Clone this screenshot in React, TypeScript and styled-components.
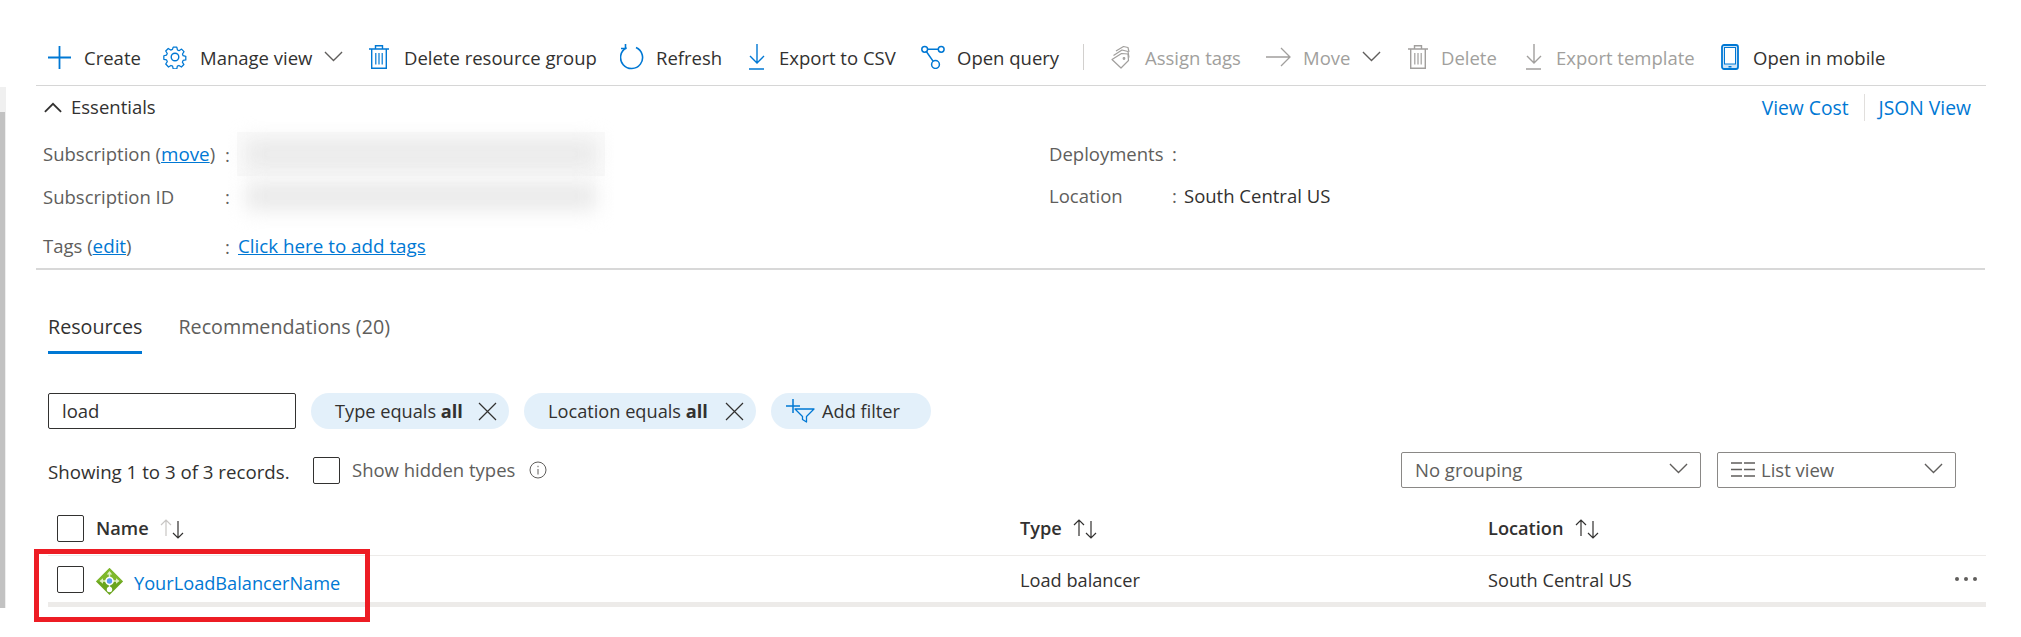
import React from 'react';
import styled, { createGlobalStyle } from 'styled-components';

const BLUE = '#0078d4';
const MUTED = '#a19f9d';

const GlobalStyle = createGlobalStyle`
  html, body {
    margin: 0;
    padding: 0;
    background: #fff;
  }
  body {
    font-family: 'Open Sans', 'Noto Sans', sans-serif;
    font-size: 18.5px;
    color: #323130;
  }
  * {
    box-sizing: border-box;
  }
`;

const Page = styled.div`
  display: flex;
  width: 2021px;
  height: 637px;
  overflow: hidden;
`;

const Rail = styled.div`
  flex: none;
  width: 36px;
  padding-top: 87px;
`;

const RailTop = styled.div`
  width: 6px;
  height: 25px;
  background: #f0f0f0;
`;

const RailThumb = styled.div`
  width: 6px;
  height: 496px;
  background: #c2c2c2;
  border-right: 1px solid #eee;
`;

const Content = styled.div`
  position: relative;
  flex: none;
  width: 1950px;
  padding-top: 29px;
`;

const Toolbar = styled.div`
  display: flex;
  align-items: center;
  height: 57px;
  padding-left: 12px;
  border-bottom: 1px solid #d6d6d6;
`;

const ToolItem = styled.div<{ $width: number; $disabled?: boolean }>`
  display: flex;
  flex: none;
  align-items: center;
  width: ${(p) => p.$width}px;
  white-space: nowrap;
  color: ${(p) => (p.$disabled ? MUTED : '#323130')};
`;

const ToolIcon = styled.span<{ $width: number; $disabled?: boolean }>`
  display: flex;
  flex: none;
  align-items: center;
  width: ${(p) => p.$width}px;
  height: 28px;
  color: ${(p) => (p.$disabled ? MUTED : BLUE)};
`;

const ToolChevron = styled.span`
  display: flex;
  margin-left: 12px;
  color: #605e5c;
`;

const ToolDivider = styled.div`
  flex: none;
  width: 28px;
  height: 26px;
  border-left: 1px solid #d2d0ce;
`;

const EssentialsHead = styled.div`
  display: flex;
  align-items: center;
  height: 43px;
  padding: 0 15px 0 8px;
`;

const EssentialsTitle = styled.span`
  margin-left: 9px;
  margin-top: -2px;
  font-weight: 500;
  color: #323130;
`;

const HeadLinks = styled.div`
  display: flex;
  align-items: center;
  margin-left: auto;
`;

const PlainLink = styled.a<{ $divided?: boolean }>`
  font-size: 19.3px;
  color: ${BLUE};
  ${(p) =>
    p.$divided &&
    `
    padding-left: 14px;
    margin-left: 15px;
    border-left: 1px solid #e1dfdd;
  `}
`;

const EssentialsGrid = styled.div`
  display: grid;
  grid-template-columns: 1006px 1fr;
  grid-template-rows: 42px 42px 54px;
  margin-top: 3px;
  margin-right: 1px;
  padding-left: 7px;
  height: 138px;
  border-bottom: 2px solid #d8d8d8;
`;

const Prop = styled.div<{ $labelWidth: number; $low?: boolean }>`
  display: grid;
  grid-template-columns: ${(p) => p.$labelWidth}px 13px 1fr;
  align-items: center;
  height: 42px;
  margin-top: ${(p) => (p.$low ? 9 : 0)}px;
  color: #605e5c;
  white-space: nowrap;
`;

const Underlined = styled.a`
  font-size: 18.8px;
  color: ${BLUE};
  text-decoration: underline;
`;

const Value = styled.span`
  margin-left: -1px;
  color: #323130;
`;

const BlurPatch = styled.div<{ $soft?: boolean }>`
  display: flex;
  align-items: center;
  justify-content: center;
  width: 368px;
  height: 44px;
  margin-left: -1px;
  background: ${(p) => (p.$soft ? 'transparent' : '#fafafa')};
`;

const BlurBar = styled.div`
  width: 350px;
  height: 28px;
  background: #e9e9e9;
  filter: blur(10px);
`;

const Tabs = styled.div`
  display: flex;
  gap: 36px;
  padding: 40px 0 0 12px;
`;

const Tab = styled.div<{ $active?: boolean }>`
  height: 44px;
  line-height: 34px;
  font-size: 19.7px;
  color: ${(p) => (p.$active ? '#323130' : '#605e5c')};
  border-bottom: 3px solid ${(p) => (p.$active ? BLUE : 'transparent')};
`;

const FilterRow = styled.div`
  display: flex;
  align-items: center;
  gap: 15px;
  margin-top: 39px;
  padding-left: 12px;
`;

const SearchBox = styled.div`
  flex: none;
  width: 248px;
  height: 36px;
  padding-left: 13px;
  line-height: 34px;
  border: 1px solid #323130;
  border-radius: 2px;
`;

const Pill = styled.div<{ $width: number }>`
  display: flex;
  flex: none;
  align-items: center;
  width: ${(p) => p.$width}px;
  height: 36px;
  padding-left: 24px;
  background: #e3f0fa;
  border-radius: 18px;
  font-size: 18.2px;
  white-space: nowrap;
`;

const PillClose = styled.span`
  display: flex;
  margin-left: auto;
  margin-right: 12px;
  color: #323130;
`;

const AddFilterPill = styled(Pill)`
  padding-left: 15px;
  gap: 7px;
`;

const ListRow = styled.div`
  display: flex;
  align-items: center;
  height: 36px;
  margin-top: 23px;
  padding: 0 30px 0 12px;
`;

const Records = styled.span`
  width: 265px;
  padding-top: 2px;
  font-size: 18.7px;
  white-space: nowrap;
`;

const Check = styled.span`
  display: block;
  flex: none;
  width: 27px;
  height: 27px;
  border: 1px solid #323130;
  border-radius: 2px;
  background: #fff;
`;

const HiddenLabel = styled.span`
  margin: -2px 14px 0 12px;
  color: #605e5c;
  white-space: nowrap;
`;

const InfoIcon = styled.span`
  display: flex;
  color: #605e5c;
`;

const SelectGroup = styled.div`
  display: flex;
  gap: 16px;
  margin-left: auto;
`;

const Select = styled.div<{ $width: number }>`
  display: flex;
  flex: none;
  align-items: center;
  width: ${(p) => p.$width}px;
  height: 36px;
  padding: 0 12px 2px 13px;
  border: 1px solid #8a8886;
  border-radius: 2px;
  color: #605e5c;
`;

const SelectIcon = styled.span`
  display: flex;
  margin-right: 6px;
`;

const SelectChevron = styled.span`
  display: flex;
  margin-left: auto;
`;

const TableRow = styled.div<{ $head?: boolean }>`
  display: grid;
  grid-template-columns: 972px 468px 1fr;
  align-items: center;
  height: ${(p) => (p.$head ? 55 : 46)}px;
  margin-top: ${(p) => (p.$head ? 13 : 0)}px;
  margin-left: 12px;
  font-size: 18.2px;
  border-bottom: ${(p) => (p.$head ? '1px solid #edebe9' : 'none')};
`;

const NameCell = styled.div`
  display: flex;
  align-items: center;
  padding-left: 9px;
`;

const HeadLabel = styled.span`
  display: flex;
  align-items: center;
  font-weight: 600;
  color: #323130;
`;

const NameLabel = styled(HeadLabel)`
  margin-left: 12px;
`;

const SortIcon = styled.span`
  display: flex;
  margin-left: 11px;
`;

const ResourceIcon = styled.span`
  display: flex;
  margin: 5px 11px 0 12px;
`;

const ResourceLink = styled.a`
  margin-top: 7px;
  color: ${BLUE};
`;

const CellText = styled.span`
  padding-top: 2px;
  color: #323130;
`;

const LocationCell = styled.div`
  display: flex;
  align-items: center;
  justify-content: space-between;
  padding-right: 9px;
`;

const Dots = styled.span`
  display: flex;
  gap: 5px;
`;

const Dot = styled.i`
  display: block;
  width: 4px;
  height: 4px;
  border-radius: 50%;
  background: #605e5c;
`;

const TableFoot = styled.div`
  height: 5px;
  margin-left: 12px;
  background: #edebe9;
`;

const Highlight = styled.div`
  position: absolute;
  left: -2px;
  top: 549px;
  width: 336px;
  height: 73px;
  border: 5px solid #ed1c24;
  pointer-events: none;
`;

const Chevron = ({ up, size = 19 }: { up?: boolean; size?: number }) => (
  <svg width={size} height={size * 0.6} viewBox="0 0 20 12" fill="none" stroke="currentColor" strokeWidth={up ? 2 : 1.4}>
    <path d={up ? 'M1 11 10 2l9 9' : 'M1 1l9 9 9-9'} />
  </svg>
);

const Close = () => (
  <svg width="19" height="19" viewBox="0 0 19 19" stroke="currentColor" strokeWidth="1.2">
    <path d="M1 1l17 17M18 1 1 18" />
  </svg>
);

const PlusIcon = () => (
  <svg width="23" height="23" viewBox="0 0 23 23" stroke="currentColor" strokeWidth="1.8">
    <path d="M11.5 0v23M0 11.5h23" />
  </svg>
);

const GearIcon = () => (
  <svg width="24" height="24" viewBox="0 0 24 24" fill="none" stroke="currentColor" strokeWidth="1.4" strokeLinejoin="round">
    <path d="M10 1h4l.7 3.2 1.8.8 2.8-1.8 2.7 2.8-1.7 2.7.7 1.8 3 .7v4l-3 .6-.8 1.9 1.7 2.7-2.8 2.7-2.7-1.7-1.8.8-.6 3h-4l-.7-3-1.8-.8-2.7 1.7L1.700 19.800l1.700-2.700-.8-1.900-3-.6v-4l3-.7.8-1.800L1.700 5.300l2.800-2.800 2.700 1.800 2-.8z" transform="translate(1.200 1.200) scale(.9)" />
    <circle cx="12" cy="12" r="3.800" />
  </svg>
);

const TrashIcon = () => (
  <svg width="20" height="26" viewBox="0 0 20 26" fill="none" stroke="currentColor" strokeWidth="1.4">
    <path d="M0 5h20M6.500 5V1.700h7V5M2.700 5v19.300h14.600V5" />
    <path d="M6.800 9v11.500M10 9v11.500M13.200 9v11.500" strokeWidth="1.200" />
  </svg>
);

const RefreshIcon = () => (
  <svg width="24" height="26" viewBox="0 0 24 26" fill="none" stroke="currentColor" strokeWidth="1.600">
    <path d="M6.500 3.800A11 11 0 1 0 16 3.500" />
    <path d="M5.500 0v4.500H1" />
  </svg>
);

const DownloadIcon = () => (
  <svg width="18" height="26" viewBox="0 0 18 26" fill="none" stroke="currentColor" strokeWidth="1.400">
    <path d="M9 0v18.500M2 12l7 7 7-7M1 25h15" />
  </svg>
);

const QueryIcon = () => (
  <svg width="24" height="24" viewBox="0 0 24 24" fill="none" stroke="currentColor" strokeWidth="1.500">
    <circle cx="3.700" cy="4.300" r="2.900" />
    <circle cx="20.200" cy="4.300" r="2.900" />
    <circle cx="14.500" cy="19.500" r="3.900" />
    <path d="M6.600 4.300h10.700M5.500 6.700l6.700 9.700" />
  </svg>
);

const TagsIcon = () => (
  <svg width="20" height="24" viewBox="0 0 20 24" fill="none" stroke="currentColor" strokeWidth="1.200" strokeLinejoin="round">
    <path d="M1 14.500 10 23l7.500-7.500-.5-6.500-6.500-.5z" />
    <path d="M2.500 10.500 11 5l6 1.500 1 6" />
    <path d="M5 6 12.500 1.500 17 2.500l1 4.500" />
    <circle cx="13" cy="13.500" r=".8" />
  </svg>
);

const ArrowIcon = () => (
  <svg width="25" height="20" viewBox="0 0 25 20" fill="none" stroke="currentColor" strokeWidth="1.300">
    <path d="M0 10h24M15 1l9 9-9 9" />
  </svg>
);

const MobileIcon = () => (
  <svg width="18" height="26" viewBox="0 0 18 26" fill="none">
    <rect x="1" y="1" width="16" height="24" rx="2" fill="#cfe4f7" stroke="currentColor" strokeWidth="1.800" />
    <rect x="3.500" y="3.500" width="11" height="16.500" fill="#fff" stroke="currentColor" strokeWidth="1" />
    <rect x="7.500" y="22" width="3" height="1.500" fill="currentColor" />
  </svg>
);

const FilterPlusIcon = () => (
  <svg width="29" height="24" viewBox="0 0 29 24" fill="none" stroke={BLUE} strokeWidth="1.300">
    <path d="M0 7h14M7 0v14" strokeWidth="1.500" />
    <path d="M9 10h19l-7.500 7.500V23l-4-2.500v-3z" strokeLinejoin="round" />
  </svg>
);

const Info = () => (
  <svg width="18" height="18" viewBox="0 0 18 18" fill="none" stroke="currentColor" strokeWidth="1">
    <circle cx="9" cy="9" r="8" />
    <path d="M9 8v5.500M9 4.800v1.400" />
  </svg>
);

const ListIcon = () => (
  <svg width="24" height="15" viewBox="0 0 24 15" stroke="currentColor" strokeWidth="1.300">
    <path d="M0 1h11M13 1h11M0 7.500h11M13 7.500h11M0 14h11M13 14h11" />
  </svg>
);

const SortArrows = ({ faded }: { faded?: boolean }) => (
  <svg width="24" height="21" viewBox="0 0 24 21" fill="none" strokeWidth="1.200">
    <path d="M6 18V2M1 7l5-5 5 5" stroke={faded ? '#c8c6c4' : '#323130'} />
    <path d="M18 3v17M13 15l5 5 5-5" stroke="#323130" />
  </svg>
);

const BalancerIcon = () => (
  <svg width="27" height="27" viewBox="0 0 27 27">
    <path d="M13.500 0 27 13.500 13.500 27 0 13.500z" fill="#6aa51e" />
    <path d="M13.500 0 27 13.500H0z" fill="#7fb82c" />
    <g stroke="#dff0c4" strokeWidth="1.500" fill="none">
      <path d="M5 13h17M13.500 4.500v16" />
    </g>
    <path d="M13.500 3 10.800 6.500h5.400zM3.500 13 7 10.300v5.400zM23.500 13 20 10.300v5.400z" fill="#dff0c4" />
    <circle cx="13.500" cy="13" r="4.300" fill="#fff" />
    <circle cx="13.500" cy="13" r="2.700" fill="#5b9bf5" />
    <circle cx="13.500" cy="21.500" r="2.700" fill="#fff" />
  </svg>
);

type Tool = {
  label: string;
  width: number;
  iconWidth: number;
  icon: React.ReactNode;
  disabled?: boolean;
  menu?: boolean;
};

const leftTools: Tool[] = [
  { label: 'Create', width: 115, iconWidth: 36, icon: <PlusIcon /> },
  { label: 'Manage view', width: 206, iconWidth: 37, icon: <GearIcon />, menu: true },
  { label: 'Delete resource group', width: 251, iconWidth: 35, icon: <TrashIcon /> },
  { label: 'Refresh', width: 128, iconWidth: 36, icon: <RefreshIcon /> },
  { label: 'Export to CSV', width: 173, iconWidth: 31, icon: <DownloadIcon /> },
  { label: 'Open query', width: 162, iconWidth: 36, icon: <QueryIcon /> },
];

const rightTools: Tool[] = [
  { label: 'Assign tags', width: 155, iconWidth: 34, icon: <TagsIcon />, disabled: true },
  { label: 'Move', width: 142, iconWidth: 37, icon: <ArrowIcon />, disabled: true, menu: true },
  { label: 'Delete', width: 117, iconWidth: 33, icon: <TrashIcon />, disabled: true },
  { label: 'Export template', width: 196, iconWidth: 31, icon: <DownloadIcon />, disabled: true },
  { label: 'Open in mobile', width: 170, iconWidth: 32, icon: <MobileIcon /> },
];

const renderTool = (tool: Tool) => (
  <ToolItem key={tool.label} $width={tool.width} $disabled={tool.disabled}>
    <ToolIcon $width={tool.iconWidth} $disabled={tool.disabled}>
      {tool.icon}
    </ToolIcon>
    {tool.label}
    {tool.menu && (
      <ToolChevron>
        <Chevron />
      </ToolChevron>
    )}
  </ToolItem>
);

export default function App() {
  return (
    <>
      <GlobalStyle />
      <Page>
        <Rail>
          <RailTop />
          <RailThumb />
        </Rail>
        <Content>
          <Toolbar>
            {leftTools.map(renderTool)}
            <ToolDivider />
            {rightTools.map(renderTool)}
          </Toolbar>

          <EssentialsHead>
            <Chevron up size={18} />
            <EssentialsTitle>Essentials</EssentialsTitle>
            <HeadLinks>
              <PlainLink>View Cost</PlainLink>
              <PlainLink $divided>JSON View</PlainLink>
            </HeadLinks>
          </EssentialsHead>

          <EssentialsGrid>
            <Prop $labelWidth={182}>
              <span>
                Subscription (<Underlined>move</Underlined>)
              </span>
              <span>:</span>
              <BlurPatch>
                <BlurBar />
              </BlurPatch>
            </Prop>
            <Prop $labelWidth={123}>
              <span>Deployments</span>
              <span>:</span>
            </Prop>
            <Prop $labelWidth={182}>
              <span>Subscription ID</span>
              <span>:</span>
              <BlurPatch $soft>
                <BlurBar />
              </BlurPatch>
            </Prop>
            <Prop $labelWidth={123}>
              <span>Location</span>
              <span>:</span>
              <Value>South Central US</Value>
            </Prop>
            <Prop $labelWidth={182} $low>
              <span>
                Tags (<Underlined>edit</Underlined>)
              </span>
              <span>:</span>
              <Underlined>Click here to add tags</Underlined>
            </Prop>
          </EssentialsGrid>

          <Tabs>
            <Tab $active>Resources</Tab>
            <Tab>Recommendations (20)</Tab>
          </Tabs>

          <FilterRow>
            <SearchBox>load</SearchBox>
            <Pill $width={198}>
              <span>
                Type equals <b>all</b>
              </span>
              <PillClose>
                <Close />
              </PillClose>
            </Pill>
            <Pill $width={232}>
              <span>
                Location equals <b>all</b>
              </span>
              <PillClose>
                <Close />
              </PillClose>
            </Pill>
            <AddFilterPill $width={160}>
              <FilterPlusIcon />
              Add filter
            </AddFilterPill>
          </FilterRow>

          <ListRow>
            <Records>Showing 1 to 3 of 3 records.</Records>
            <Check />
            <HiddenLabel>Show hidden types</HiddenLabel>
            <InfoIcon>
              <Info />
            </InfoIcon>
            <SelectGroup>
              <Select $width={300}>
                No grouping
                <SelectChevron>
                  <Chevron />
                </SelectChevron>
              </Select>
              <Select $width={239}>
                <SelectIcon>
                  <ListIcon />
                </SelectIcon>
                List view
                <SelectChevron>
                  <Chevron />
                </SelectChevron>
              </Select>
            </SelectGroup>
          </ListRow>

          <TableRow $head>
            <NameCell>
              <Check />
              <NameLabel>
                Name
                <SortIcon>
                  <SortArrows faded />
                </SortIcon>
              </NameLabel>
            </NameCell>
            <HeadLabel>
              Type
              <SortIcon>
                <SortArrows />
              </SortIcon>
            </HeadLabel>
            <HeadLabel>
              Location
              <SortIcon>
                <SortArrows />
              </SortIcon>
            </HeadLabel>
          </TableRow>
          <TableRow>
            <NameCell>
              <Check />
              <ResourceIcon>
                <BalancerIcon />
              </ResourceIcon>
              <ResourceLink>YourLoadBalancerName</ResourceLink>
            </NameCell>
            <CellText>Load balancer</CellText>
            <LocationCell>
              <CellText>South Central US</CellText>
              <Dots>
                <Dot />
                <Dot />
                <Dot />
              </Dots>
            </LocationCell>
          </TableRow>
          <TableFoot />

          <Highlight />
        </Content>
      </Page>
    </>
  );
}
